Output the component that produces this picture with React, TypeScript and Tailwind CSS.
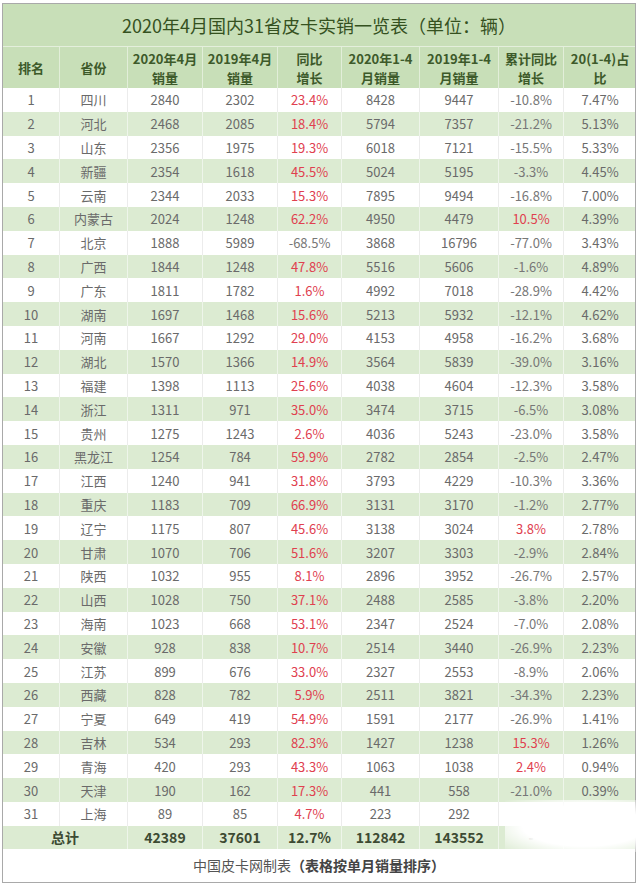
import React from 'react'

type Row = [string, string, string, string, string, string, string, string]

const ROWS: Row[] = [
  ['四川', '2840', '2302', '23.4%', '8428', '9447', '-10.8%', '7.47%'],
  ['河北', '2468', '2085', '18.4%', '5794', '7357', '-21.2%', '5.13%'],
  ['山东', '2356', '1975', '19.3%', '6018', '7121', '-15.5%', '5.33%'],
  ['新疆', '2354', '1618', '45.5%', '5024', '5195', '-3.3%', '4.45%'],
  ['云南', '2344', '2033', '15.3%', '7895', '9494', '-16.8%', '7.00%'],
  ['内蒙古', '2024', '1248', '62.2%', '4950', '4479', '10.5%', '4.39%'],
  ['北京', '1888', '5989', '-68.5%', '3868', '16796', '-77.0%', '3.43%'],
  ['广西', '1844', '1248', '47.8%', '5516', '5606', '-1.6%', '4.89%'],
  ['广东', '1811', '1782', '1.6%', '4992', '7018', '-28.9%', '4.42%'],
  ['湖南', '1697', '1468', '15.6%', '5213', '5932', '-12.1%', '4.62%'],
  ['河南', '1667', '1292', '29.0%', '4153', '4958', '-16.2%', '3.68%'],
  ['湖北', '1570', '1366', '14.9%', '3564', '5839', '-39.0%', '3.16%'],
  ['福建', '1398', '1113', '25.6%', '4038', '4604', '-12.3%', '3.58%'],
  ['浙江', '1311', '971', '35.0%', '3474', '3715', '-6.5%', '3.08%'],
  ['贵州', '1275', '1243', '2.6%', '4036', '5243', '-23.0%', '3.58%'],
  ['黑龙江', '1254', '784', '59.9%', '2782', '2854', '-2.5%', '2.47%'],
  ['江西', '1240', '941', '31.8%', '3793', '4229', '-10.3%', '3.36%'],
  ['重庆', '1183', '709', '66.9%', '3131', '3170', '-1.2%', '2.77%'],
  ['辽宁', '1175', '807', '45.6%', '3138', '3024', '3.8%', '2.78%'],
  ['甘肃', '1070', '706', '51.6%', '3207', '3303', '-2.9%', '2.84%'],
  ['陕西', '1032', '955', '8.1%', '2896', '3952', '-26.7%', '2.57%'],
  ['山西', '1028', '750', '37.1%', '2488', '2585', '-3.8%', '2.20%'],
  ['海南', '1023', '668', '53.1%', '2347', '2524', '-7.0%', '2.08%'],
  ['安徽', '928', '838', '10.7%', '2514', '3440', '-26.9%', '2.23%'],
  ['江苏', '899', '676', '33.0%', '2327', '2553', '-8.9%', '2.06%'],
  ['西藏', '828', '782', '5.9%', '2511', '3821', '-34.3%', '2.23%'],
  ['宁夏', '649', '419', '54.9%', '1591', '2177', '-26.9%', '1.41%'],
  ['吉林', '534', '293', '82.3%', '1427', '1238', '15.3%', '1.26%'],
  ['青海', '420', '293', '43.3%', '1063', '1038', '2.4%', '0.94%'],
  ['天津', '190', '162', '17.3%', '441', '558', '-21.0%', '0.39%'],
  ['上海', '89', '85', '4.7%', '223', '292', '', ''],
]

const HEADERS = [
  ['排名'],
  ['省份'],
  ['2020年4月', '销量'],
  ['2019年4月', '销量'],
  ['同比', '增长'],
  ['2020年1-4', '月销量'],
  ['2019年1-4', '月销量'],
  ['累计同比', '增长'],
  ['20(1-4)占', '比'],
]

const COLS = 'grid grid-cols-[57px_68px_75px_75px_64px_78px_79px_65px_72px]'
const FONT = { fontFamily: '"Noto Sans CJK SC", "Noto Sans", sans-serif' }

const pctClass = (v: string) => (v.startsWith('-') ? 'text-[#777]' : 'text-[#e0404f]')

export default function App() {
  return (
    <div className="relative h-[889px] w-[640px] bg-white pl-[2px] pt-[3px]" style={FONT}>
      <div className="w-[634px] border border-[#a9a9a9]">
        <div className="flex h-[43px] items-center justify-center border-b border-[#e4efdc] bg-[#c8dfb8] text-[18px] text-[#35511f]">
          2020年4月国内31省皮卡实销一览表（单位：辆）
        </div>

        <div className={`${COLS} h-[41px] bg-[#c8dfb8] text-[13px] font-bold leading-[19px] text-[#3d5a2a]`}>
          {HEADERS.map((h, i) => (
            <div
              key={i}
              className="flex flex-col items-center justify-center whitespace-nowrap border-r border-[#e2eed9] last:border-r-0"
            >
              {h.map((t) => (
                <span key={t} className="block h-[19px]">
                  {t}
                </span>
              ))}
            </div>
          ))}
        </div>

        {ROWS.map((r, i) => {
          const green = i % 2 === 1
          const cells = [String(i + 1), ...r]
          return (
            <div
              key={i}
              className={`${COLS} h-[23.8px] text-[13px] leading-none text-[#6a6a6a] ${green ? 'bg-[#dcebd2]' : 'bg-white'}`}
            >
              {cells.map((c, j) => (
                <div
                  key={j}
                  className={`flex items-center justify-center border-r last:border-r-0 ${green ? 'border-[#eef5ea]' : 'border-[#ececec]'} ${
                    j === 4 || j === 7 ? pctClass(c) : ''
                  }`}
                >
                  {c}
                </div>
              ))}
            </div>
          )
        })}

        <div className={`${COLS} h-[23px] bg-[#dcebd2] text-[14px] font-bold leading-none text-[#3d4a33]`}>
          <div className="col-span-2 flex items-center justify-center border-r border-[#eef5ea]">总计</div>
          {['42389', '37601', '12.7%', '112842', '143552', '-', ''].map((c, j) => (
            <div key={j} className="flex items-center justify-center border-r border-[#eef5ea] last:border-r-0">
              {c}
            </div>
          ))}
        </div>

        <div className="flex h-[33px] items-center justify-center text-[14px] text-[#555]">
          中国皮卡网制表<span className="font-bold text-[#444]">（表格按单月销量排序）</span>
        </div>
      </div>

      <div className="pointer-events-none absolute left-[505px] top-[800px] h-[52px] w-[132px] bg-[radial-gradient(ellipse_at_60%_50%,white_55%,rgba(255,255,255,0)_100%)]" />
    </div>
  )
}
